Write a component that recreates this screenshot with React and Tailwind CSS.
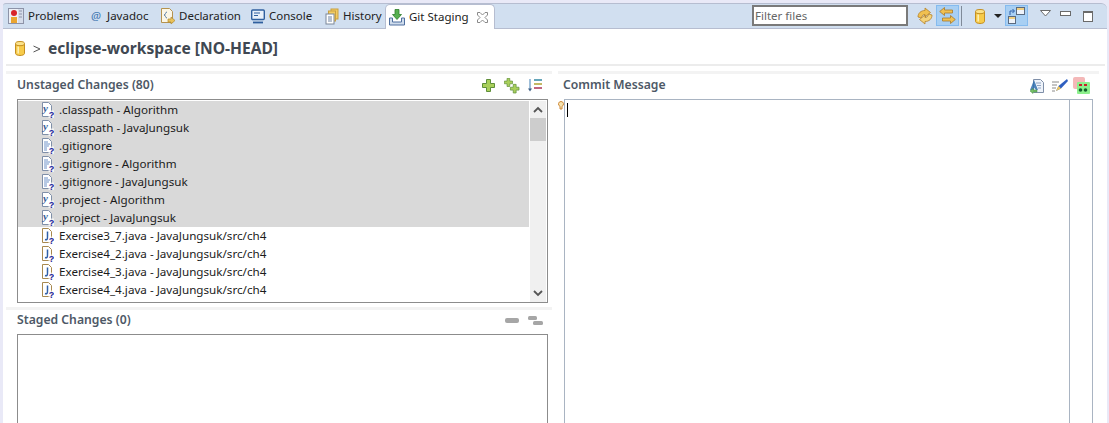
import React from 'react';

const unstaged = [
  { name: '.classpath - Algorithm', icon: 'x', selected: true },
  { name: '.classpath - JavaJungsuk', icon: 'x', selected: true },
  { name: '.gitignore', icon: 'txt', selected: true },
  { name: '.gitignore - Algorithm', icon: 'txt', selected: true },
  { name: '.gitignore - JavaJungsuk', icon: 'txt', selected: true },
  { name: '.project - Algorithm', icon: 'x', selected: true },
  { name: '.project - JavaJungsuk', icon: 'x', selected: true },
  { name: 'Exercise3_7.java - JavaJungsuk/src/ch4', icon: 'java' },
  { name: 'Exercise4_2.java - JavaJungsuk/src/ch4', icon: 'java' },
  { name: 'Exercise4_3.java - JavaJungsuk/src/ch4', icon: 'java' },
  { name: 'Exercise4_4.java - JavaJungsuk/src/ch4', icon: 'java' },
];

const Cylinder = () => (
  <svg width="10" height="15" viewBox="0 0 10 15">
    <path d="M.5 3v9.500c0 1 2 2 4.500 2s4.500-1 4.500-2V3z" fill="#f7cb4a" stroke="#c48f22" />
    <ellipse cx="5" cy="2.600" rx="4.500" ry="2.100" fill="#fbe28a" stroke="#c48f22" />
    <path d="M3.200 5.500v7" stroke="#fdeeb0" strokeWidth="1.600" />
  </svg>
);

const ProblemsIcon = () => (
  <svg width="16" height="16" viewBox="0 0 16 16">
    <rect x="0.500" y="0.500" width="15" height="15" fill="#eef0f6" stroke="#8d93a8" />
    <rect x="10" y="1" width="5" height="14" fill="#d5dcea" />
    <circle cx="6" cy="5" r="3" fill="#d8232a" />
    <rect x="3" y="9" width="6" height="6" fill="#eaa530" />
    <path d="M11 3h3M11 6h3M11 9h3" stroke="#8d93a8" />
  </svg>
);

const DeclarationIcon = () => (
  <svg width="16" height="18" viewBox="0 0 16 18">
    <path d="M1.500 1.500h8l3 3v11h-11z" fill="#fbf6e6" stroke="#b5924f" />
    <path d="M7 5c-2 0-1 3-3 3 2 0 1 3 3 3" fill="none" stroke="#5c7fa8" />
    <path d="M8 12h3v-2l4 3.500-4 3.500v-2H8z" fill="#e9c25b" stroke="#b08a30" strokeWidth="0.700" />
  </svg>
);

const ConsoleIcon = () => (
  <svg width="14" height="15" viewBox="0 0 14 15">
    <rect x="0.700" y="1" width="12.600" height="9.500" rx="1" fill="#e8f0fa" stroke="#2f5f9e" strokeWidth="1.400" />
    <path d="M3 4h6M3 6.500h4" stroke="#2f5f9e" />
    <path d="M2 13.500h10" stroke="#2f5f9e" strokeWidth="1.800" />
  </svg>
);

const HistoryIcon = () => (
  <svg width="14" height="17" viewBox="0 0 14 17">
    <rect x="6" y="1" width="7" height="10" fill="#f3cc62" stroke="#c9a040" />
    <rect x="3.500" y="3" width="7" height="10" fill="#f3cc62" stroke="#c9a040" />
    <rect x="1" y="6" width="8" height="10" fill="#fff" stroke="#7d8899" />
    <path d="M3 9h4M3 11h4M3 13h4" stroke="#6f83a3" />
  </svg>
);

const StagingIcon = () => (
  <svg width="16" height="17" viewBox="0 0 16 17">
    <path d="M.500 9v7h15V9h-3v4h-9V9z" fill="#cfdcec" stroke="#4f6f9f" />
    <path d="M6 .500h4v5h2.500L8 10.500 3.500 5.500H6z" fill="#57b04f" stroke="#2f7d2c" strokeWidth="0.800" />
  </svg>
);

const CloseIcon = () => (
  <svg width="11" height="11" viewBox="0 0 11 11">
    <path d="M.500.500h2.500l2.500 2.500L8 .500h2.500V3L8 5.500 10.500 8v2.500H8L5.500 8 3 10.500H.500V8L3 5.500.500 3z" fill="#fff" stroke="#8a8a8a" />
  </svg>
);

const SyncIcon = () => (
  <svg width="18" height="18" viewBox="0 0 18 18">
    <path d="M2 10c0-4 3-6.500 7-6.500V1l5.500 4.500L9 10V7.500c-2 0-3 1-3.500 3.500z" fill="#f0c050" stroke="#b5812a" strokeWidth="0.800" />
    <path d="M16 8c0 4-3 6.500-7 6.500V17l-5.500-4.500L9 8v2.500c2 0 3-1 3.500-3.500z" fill="#f4d37a" stroke="#b5812a" strokeWidth="0.800" />
  </svg>
);

const LinkIcon = () => (
  <svg width="17" height="17" viewBox="0 0 17 17">
    <path d="M.700 4.500L5.500.500v2.500h8v3h-8v2.500z" fill="#f0c050" stroke="#a8782a" strokeWidth="0.800" />
    <path d="M16.300 12.500L11.500 8.500V11h-8v3h8v2.500z" fill="#f0c050" stroke="#a8782a" strokeWidth="0.800" />
  </svg>
);

const LayoutIcon = () => (
  <svg width="17" height="17" viewBox="0 0 17 17">
    <rect x="8.500" y="0.500" width="8" height="7" fill="#eef3fa" stroke="#5a6a80" />
    <path d="M9 1h7v2H9z" fill="#f0cf80" />
    <rect x="0.500" y="9.500" width="7" height="7" fill="#eef3fa" stroke="#5a6a80" />
    <path d="M1 10h6v2H1z" fill="#f0cf80" />
    <path d="M2 8V4h4M4.500 2L6.500 4 4.500 6" fill="none" stroke="#2f5fa8" />
  </svg>
);

const Plus = ({ x = 0, y = 0, s = 1 }) => (
  <path
    transform={`translate(${x} ${y}) scale(${s})`}
    d="M4.500.5h4v4h4v4h-4v4h-4v-4h-4v-4h4z"
    fill="#a9cf5a"
    stroke="#5f8f3a"
  />
);

// page with a blue "?" in the corner, shared by the file rows
const FileIcon = ({ type }) => (
  <svg width="13" height="16" viewBox="0 0 13 16" className="shrink-0">
    <path d="M1.500.5h6l3 3v11h-9z" fill="#fff" stroke={type === 'java' ? '#a8894f' : '#7f8fa8'} />
    {type === 'txt' && <path d="M3 4h4M3 6h6M3 8h5M3 10h3M3 12h3" stroke="#6f92c8" />}
    {type === 'x' && <text x="2" y="10" fontSize="11" fontStyle="italic" fontWeight="700" fill="#3a5f9a" fontFamily="Liberation Serif, serif">y</text>}
    {type === 'java' && <path d="M6.500 3.500v6.500c0 1.500-1 2-2.500 1.500" fill="none" stroke="#2f5fa8" strokeWidth="1.500" />}
    <rect x="7.500" y="8.500" width="5.500" height="7.500" fill="#fff" opacity="0.700" />
    <text x="7.800" y="15.500" fontSize="9" fontWeight="700" fill="#1c1c9c" fontFamily="Liberation Sans, sans-serif">?</text>
  </svg>
);

const SectionHeader = ({ title, children, className = '' }) => (
  <div className={`flex items-center justify-between border-t-[3px] border-[#f3f3f3] ${className}`}>
    <span className="font-semibold text-[12.2px] text-[#4d5866]">{title}</span>
    <div className="flex items-center">{children}</div>
  </div>
);

const App = () => {
  return (
    <div
      className="w-[1109px] h-[423px] overflow-hidden bg-[#e9e9f7] pt-[3px] pl-[3px] pr-[2px] text-[11.5px] text-[#222] flex flex-col"
      style={{ fontFamily: '"Noto Sans", "Liberation Sans", sans-serif' }}
    >
      {/* view tab bar */}
      <div className="flex items-center justify-between h-[26px] shrink-0 bg-[#d1dff0] border-t border-b border-[#b6bdd0] rounded-tr-[6px] rounded-tl-[3px] whitespace-nowrap">
        <div className="flex items-center h-full">
          <div className="flex items-center w-[74px] gap-[4px] ml-[5px]">
            <ProblemsIcon />
            <span>Problems</span>
          </div>
          <div className="flex items-center w-[70px] gap-[5px] ml-[8px]">
            <span className="w-[12px] text-center text-[#3f77b0] italic">@</span>
            <span>Javadoc</span>
          </div>
          <div className="flex items-center w-[91px] gap-[3px]">
            <DeclarationIcon />
            <span>Declaration</span>
          </div>
          <div className="flex items-center w-[74px] gap-[4px]">
            <ConsoleIcon />
            <span>Console</span>
          </div>
          <div className="flex items-center w-[60px] gap-[4px]">
            <HistoryIcon />
            <span>History</span>
          </div>
          <div className="flex items-center shrink-0 w-[110px] h-[26px] -mb-[1px] pl-[3px] bg-white border-l border-r border-t border-[#b6bdd0] rounded-t-[5px]">
            <StagingIcon />
            <span className="ml-[4px] w-[68px]">Git Staging</span>
            <CloseIcon />
          </div>
        </div>

        <div className="flex items-center h-full pr-[14px]">
          <input
            readOnly
            placeholder="Filter files"
            className="w-[156px] h-[21px] -mt-[1px] bg-white border-2 border-[#7a7a7a] px-[1px] pb-[1px] text-[11.5px] placeholder:text-[#666] outline-none"
          />
          <span className="ml-[8px] flex"><SyncIcon /></span>
          <span className="ml-[2px] -mt-[1px] flex items-center justify-center w-[23px] h-[21px] bg-[#a8cff3] border border-[#85bbef]"><LinkIcon /></span>
          <span className="ml-[2px] w-[1px] h-[20px] bg-[#7f8a99]" />
          <span className="ml-[13px] flex"><Cylinder /></span>
          <span className="ml-[9px] w-0 h-0 border-x-[4px] border-x-transparent border-t-[4px] border-t-[#222]" />
          <span className="ml-[3px] -mt-[1px] flex items-center justify-center w-[23px] h-[21px] bg-[#a8cff3] border border-[#85bbef]"><LayoutIcon /></span>
          <svg width="11" height="7" viewBox="0 0 11 7" className="ml-[12px] -mt-[6px]">
            <path d="M.5.5h10L5.500 6z" fill="#fff" stroke="#6a6a6a" />
          </svg>
          <span className="ml-[9px] -mt-[6px] w-[11px] h-[5px] bg-white border border-[#6a6a6a]" />
          <span className="ml-[12px] w-[10px] h-[11px] bg-white border border-[#6a6a6a] border-t-2" />
        </div>
      </div>

      {/* git staging view */}
      <div className="flex-1 bg-white flex flex-col min-h-0 pl-[3px]">
        <div className="h-[37px] shrink-0 flex items-center mr-[2px] pt-[4px] border-b-2 border-[#ececec]">
          <span className="ml-[9px] flex"><Cylinder /></span>
          <svg width="8" height="8" viewBox="0 0 8 8" className="ml-[8px]">
            <path d="M.5 1l6.500 3-6.500 3" fill="none" stroke="#555" />
          </svg>
          <span className="ml-[7px] text-[15.6px] font-bold text-[#404852]">eclipse-workspace [NO-HEAD]</span>
        </div>

        <div className="flex flex-1 min-h-0 mt-[5px] pr-[8px]">
          {/* left column */}
          <div className="w-[546px] shrink-0 flex flex-col">
            <SectionHeader title="Unstaged Changes (80)" className="h-[28px] pl-[11px] pr-[9px] pb-[2px]">
              <svg width="13" height="13" viewBox="0 0 13 13"><Plus /></svg>
              <svg width="16" height="16" viewBox="0 0 16 16" className="ml-[9px]">
                <Plus x={0} y={0} s={0.68} />
                <Plus x={6} y={6} s={0.72} />
              </svg>
              <svg width="16" height="15" viewBox="0 0 16 15" className="ml-[7px]">
                <path d="M3 1v11" stroke="#3f7fb5" />
                <path d="M1 10.500l2 3 2-3z" fill="#3f5f85" />
                <path d="M7 2h8" stroke="#3f8fa8" strokeWidth="1.600" />
                <path d="M7 6h8" stroke="#b5a83f" strokeWidth="1.600" />
                <path d="M7 10h8" stroke="#b03f5f" strokeWidth="1.600" />
              </svg>
            </SectionHeader>

            <div className="ml-[11px] mr-[4px] h-[204px] shrink-0 border border-[#8c8c8c] pt-[1px] flex">
              <div className="flex-1 min-w-0 overflow-hidden">
                {unstaged.map((file) => (
                  <div
                    key={file.name}
                    className={`flex items-center h-[18px] pl-[23px] gap-[5px] text-[11.65px] text-[#1c1c1c] ${file.selected ? 'bg-[#d9d9d9]' : ''}`}
                  >
                    <FileIcon type={file.icon} />
                    <span className="whitespace-nowrap">{file.name}</span>
                  </div>
                ))}
              </div>
              <div className="w-[16px] ml-[1px] mr-[1px] bg-[#f0f0f0] flex flex-col items-center">
                <svg width="16" height="17" viewBox="0 0 16 17" className="shrink-0">
                  <path d="M4 11l4-4 4 4" fill="none" stroke="#555" strokeWidth="1.800" />
                </svg>
                <div className="w-full h-[23px] bg-[#cdcdcd]" />
                <div className="flex-1" />
                <svg width="16" height="17" viewBox="0 0 16 17" className="shrink-0">
                  <path d="M4 6l4 4 4-4" fill="none" stroke="#555" strokeWidth="1.800" />
                </svg>
              </div>
            </div>

            <SectionHeader title="Staged Changes (0)" className="mt-[4px] h-[27px] pl-[11px] pr-[9px] pb-[3px]">
              <span className="w-[14px] h-[5px] rounded-[2px] bg-[#a6a6a6]" />
              <svg width="16" height="11" viewBox="0 0 16 11" className="ml-[8px]">
                <rect x="1" y="1" width="9" height="4" rx="1.500" fill="#a6a6a6" />
                <rect x="6" y="6" width="10" height="4" rx="1.500" fill="#a6a6a6" />
              </svg>
            </SectionHeader>

            <div className="ml-[11px] mr-[4px] flex-1 border border-[#8c8c8c] border-b-0" />
          </div>

          {/* commit message */}
          <div className="flex-1 min-w-0 flex flex-col ml-[6px]">
            <SectionHeader title="Commit Message" className="h-[28px] pl-[5px] pr-[9px] pb-[2px]">
              <svg width="16" height="16" viewBox="0 0 16 16">
                <path d="M4.500 1.500h7l3 3v10h-10z" fill="#eef3fa" stroke="#7f8fa8" />
                <path d="M7 5h5M8 7.500h4M9 10h3" stroke="#8fa3c0" />
                <path d="M5 2L1 12h3l1-2.500L7 12h2z" fill="#2f6fae" opacity="0.850" />
                <path d="M1 13l3-2.500V12h4v2H4v1.500z" fill="#78c06a" stroke="#3f8f3f" strokeWidth="0.500" />
              </svg>
              <svg width="17" height="16" viewBox="0 0 17 16" className="ml-[6px]">
                <path d="M1 4h7M1 7h5M1 10h4M1 13h3" stroke="#8a8a8a" />
                <path d="M16 1L7.500 8 5 13l5-2.500L17 3z" fill="#2f5fc0" />
                <path d="M7.500 8L5 13l5-2.500z" fill="#f2c85a" />
              </svg>
              <svg width="17" height="17" viewBox="0 0 17 17" className="ml-[5px]">
                <rect x="0" y="0" width="12" height="12" rx="2" fill="#f4b8b8" />
                <rect x="4" y="5" width="13" height="12" rx="1" fill="#8cf08c" />
                <path d="M6 8h3M11 8h3" stroke="#c8202a" strokeWidth="2" />
                <circle cx="7.500" cy="13" r="1.800" fill="#10602a" />
                <circle cx="12.500" cy="13" r="1.800" fill="#10602a" />
              </svg>
            </SectionHeader>

            <div className="flex flex-1 min-h-0 relative mx-[6px]">
              <svg width="6" height="9" viewBox="0 0 6 9" className="absolute -left-[6px] top-[2px]">
                <path d="M3 .5a2.500 2.500 0 0 1 1 4.800V8H2V5.300A2.500 2.500 0 0 1 3 .5z" fill="#f5e3b0" stroke="#d08a3a" />
              </svg>
              <div className="flex-1 border border-[#a9b4c2] border-b-0 flex">
                <div className="flex-1 pt-[3px] pl-[2px]">
                  <div className="w-[1px] h-[14px] bg-black" />
                </div>
                <div className="w-[23px] border-l border-[#a9b4c2]" />
              </div>
            </div>
          </div>
        </div>
      </div>
    </div>
  );
};

export default App;
